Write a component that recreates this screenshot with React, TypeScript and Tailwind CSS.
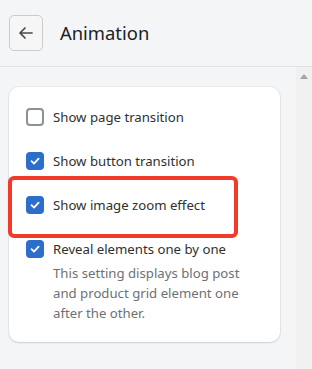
import React from "react";

function Box({ checked }: { checked: boolean }) {
  if (checked) {
    return (
      <span className="flex h-[18px] w-[18px] shrink-0 items-center justify-center rounded-[4px] bg-[#2c6ecb]">
        <svg width="12" height="12" viewBox="0 0 12 12" fill="none">
          <path d="M2.5 6.2 L5 8.6 L9.6 3.6" stroke="white" strokeWidth="1.8" strokeLinecap="round" strokeLinejoin="round" />
        </svg>
      </span>
    );
  }
  return <span className="block h-[18px] w-[18px] shrink-0 rounded-[4px] border-2 border-[#8c9196] bg-white" />;
}

function Row({ checked, label }: { checked: boolean; label: string }) {
  return (
    <div className="flex h-[20px] items-center gap-[9px]">
      <Box checked={checked} />
      <span className="text-[13.2px] leading-[20px] text-[#303030]">{label}</span>
    </div>
  );
}

export default function App() {
  return (
    <div className="relative h-[369px] w-[312px] overflow-hidden bg-[#f4f5f7] font-['Noto_Sans','Open_Sans',sans-serif]">
      <div className="flex h-[67px] items-center gap-[17px] border-b border-[#dfe1e4] pl-[9px]">
        <div className="flex h-[36px] w-[34px] items-center justify-center rounded-[5px] border border-[#c9cccf] bg-[#f6f6f7]">
          <svg width="18" height="18" viewBox="0 0 18 18" fill="none">
            <path d="M15 9 H3.5 M8 4 L3 9 L8 14" stroke="#4a4a4a" strokeWidth="1.7" strokeLinecap="round" strokeLinejoin="round" />
          </svg>
        </div>
        <span className="text-[18.4px] leading-[24px] text-[#202223]">Animation</span>
      </div>
      <div className="flex">
        <div className="flex-1 pl-[9px] pr-[16px] pt-[20px]">
          <div className="flex flex-col rounded-[10px] bg-white px-[17px] pb-[19px] pt-[20px] shadow-[0_1px_2px_rgba(0,0,0,0.12),0_0_0_1px_rgba(0,0,0,0.04)]">
            <div className="flex flex-col gap-[24px]">
              <Row checked={false} label="Show page transition" />
              <Row checked={true} label="Show button transition" />
              <Row checked={true} label="Show image zoom effect" />
              <Row checked={true} label="Reveal elements one by one" />
            </div>
            <p className="mt-[4px] pl-[27px] text-[13.2px] leading-[20px] text-[#6d7175]">
              This setting displays blog post and product grid element one after the other.
            </p>
          </div>
        </div>
        <div className="relative h-[302px] w-[16px] bg-[#f0f0f0]">
          <svg className="absolute left-[4px] top-[7px]" width="8" height="5" viewBox="0 0 8 5">
            <path d="M0 5 L4 0 L8 5 Z" fill="#a3a3a3" />
          </svg>
        </div>
      </div>
      <div className="pointer-events-none absolute left-[8px] top-[176px] h-[62px] w-[230px] rounded-[6px] border-4 border-[#f23a2b]" />
    </div>
  );
}
